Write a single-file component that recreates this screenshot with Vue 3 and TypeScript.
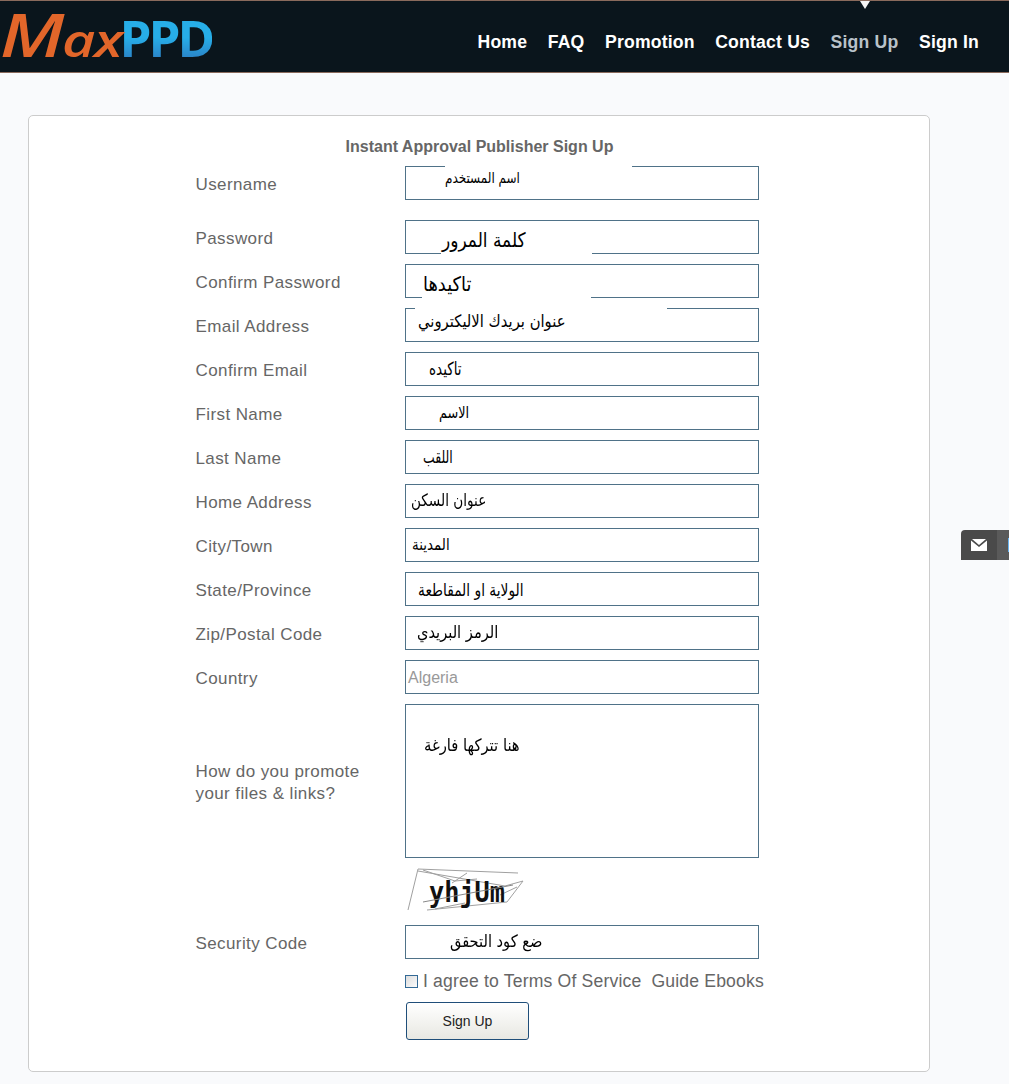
<script setup lang="ts">
interface Field {
  label: string
  text: string
  left: number
  size: number
  scale: number
  dy: number
  gap?: { side: 'top' | 'bottom'; left: number; width: number }
  cls?: string
}

const nav = ['Home', 'FAQ', 'Promotion', 'Contact Us', 'Sign Up', 'Sign In']

const fields: Field[] = [
  { label: 'Username', text: 'اسم المستخدم', left: 39, size: 15, scale: 0.8, dy: -4, gap: { side: 'top', left: 39, width: 187 }, cls: 'first' },
  { label: 'Password', text: 'كلمة المرور', left: 36, size: 20, scale: 0.85, dy: 4, gap: { side: 'bottom', left: 35, width: 151 } },
  { label: 'Confirm Password', text: 'تاكيدها', left: 17, size: 20, scale: 0.89, dy: 4, gap: { side: 'bottom', left: 16, width: 169 } },
  { label: 'Email Address', text: 'عنوان بريدك الاليكتروني', left: 12, size: 17, scale: 0.87, dy: -3, gap: { side: 'top', left: 9, width: 252 } },
  { label: 'Confirm Email', text: 'تاكيده', left: 23, size: 18, scale: 0.75, dy: 1 },
  { label: 'First Name', text: 'الاسم', left: 33, size: 16, scale: 0.8, dy: 1 },
  { label: 'Last Name', text: 'اللقب', left: 17, size: 17, scale: 0.73, dy: 1 },
  { label: 'Home Address', text: 'عنوان السكن', left: 5, size: 17, scale: 0.8, dy: 0 },
  { label: 'City/Town', text: 'المدينة', left: 6, size: 16, scale: 0.84, dy: 1 },
  { label: 'State/Province', text: 'الولاية او المقاطعة', left: 12, size: 17, scale: 0.81, dy: 2 },
  { label: 'Zip/Postal Code', text: 'الرمز البريدي', left: 11, size: 17, scale: 0.86, dy: 0 },
]

function boxStyle(f: Field) {
  return { paddingLeft: f.left + 'px', fontSize: f.size + 'px' }
}
function valStyle(f: Field) {
  return { transform: `translateY(${f.dy}px) scaleX(${f.scale})` }
}
function gapStyle(f: Field) {
  return { left: f.gap!.left + 'px', width: f.gap!.width + 'px' }
}
</script>

<template>
  <div class="page">
    <header class="topbar">
      <div class="logo"><span class="max"><span class="m">M</span>ax</span><span class="ppd">PPD</span></div>
      <nav class="nav">
        <a v-for="n in nav" :key="n" :class="{ active: n === 'Sign Up' }">{{ n }}</a>
      </nav>
    </header>

    <main class="content">
      <section class="card">
        <h1 class="title">Instant Approval Publisher Sign Up</h1>

        <div v-for="f in fields" :key="f.label" class="row" :class="f.cls">
          <label class="label">{{ f.label }}</label>
          <div class="input" :style="boxStyle(f)">
            <span class="val" :style="valStyle(f)">{{ f.text }}</span>
            <i v-if="f.gap" class="gap" :class="f.gap.side" :style="gapStyle(f)"></i>
          </div>
        </div>

        <div class="row">
          <label class="label">Country</label>
          <div class="input country">Algeria</div>
        </div>

        <div class="row tall">
          <label class="label">How do you promote<br />your files &amp; links?</label>
          <div class="input area"><span class="val area-val">هنا تتركها فارغة</span></div>
        </div>

        <div class="captcha-row">
          <svg class="captcha" width="120" height="46" viewBox="0 0 120 46">
            <g stroke="#a0a0a0" stroke-width="1" fill="none">
              <path d="M3 43 L13 2 L113 6" />
              <path d="M13 4 L100 19 L118 14" />
              <path d="M18 3 L50 14 L72 12" />
              <path d="M22 43 L102 35 L118 14" />
              <path d="M30 42 L60 36" />
              <path d="M62 6 L47 16" />
              <path d="M112 20 L95 28" />
            </g>
            <text x="24" y="35" textLength="76" lengthAdjust="spacingAndGlyphs" class="captcha-text">yhjUm</text>
            <path d="M18 35 L108 18" stroke="#888" stroke-width="1" fill="none" />
          </svg>
        </div>

        <div class="row security">
          <label class="label">Security Code</label>
          <div class="input sec"><span class="val sec-val">ضع كود التحقق</span></div>
        </div>

        <div class="agree">
          <span class="check"></span>
          <span>I agree to Terms Of Service</span>
          <span class="ebooks">Guide Ebooks</span>
        </div>

        <button class="submit" type="button">Sign Up</button>
      </section>
    </main>

    <aside class="side">
      <span class="cell">
        <svg width="16" height="12" viewBox="0 0 16 12">
          <path d="M1 0 H15 L8 6 Z" fill="#fff" />
          <path d="M0 1.5 L8 8 L16 1.5 V12 H0 Z" fill="#fff" />
        </svg>
      </span>
      <span class="cell two"><i></i></span>
    </aside>
  </div>
</template>

<style>
html, body { margin: 0; background: #f9fafc; overflow: hidden; }
</style>

<style scoped>
.page {
  position: relative;
  width: 1009px;
  height: 1084px;
  background: #f9fafc;
  font-family: "Liberation Sans", "DejaVu Sans", sans-serif;
  overflow: hidden;
}
.topbar {
  box-sizing: border-box;
  height: 73px;
  background: #0a151c;
  border-top: 1px solid #8a6a5c;
  border-bottom: 1px solid #8a6a5c;
  display: flex;
  justify-content: space-between;
  position: relative;
}
.topbar::after {
  content: "";
  position: absolute;
  left: 860px;
  top: 0;
  border-left: 5px solid transparent;
  border-right: 5px solid transparent;
  border-top: 8px solid #f4f4f4;
}
.logo {
  display: flex;
  align-items: baseline;
  height: 67px;
  white-space: nowrap;
  line-height: 67px;
  font-family: "Open Sans", sans-serif;
  font-size: 51px;
}
.max {
  display: block;
  margin-right: 22px;
  color: #e2662a;
  font-style: italic;
  font-weight: 600;
  font-size: 46px;
  letter-spacing: -1px;
  transform: scaleX(1.25);
  transform-origin: 0 50%;
}
.m { font-size: 60px; letter-spacing: -2px; }
.ppd {
  font-weight: 700;
  font-size: 51px;
  letter-spacing: -3px;
  background: linear-gradient(#27aee8 50%, #2b7fc4 85%);
  -webkit-background-clip: text;
  background-clip: text;
  color: transparent;
}
.nav {
  display: flex;
  gap: 20.5px;
  padding: 31px 30px 0 0;
  font-size: 17.6px;
  font-weight: 700;
  letter-spacing: 0.2px;
  line-height: 20px;
  color: #fff;
}
.nav .active { color: #b9c2c9; }

.content { padding: 42px 0 0 28px; }
.card {
  box-sizing: border-box;
  width: 902px;
  height: 957px;
  background: #fff;
  border: 1px solid #ccc;
  border-radius: 5px;
  padding: 21px 0 0 167px;
}
.title {
  margin: 0 0 9px;
  width: 567px;
  text-align: center;
  font-size: 16px;
  line-height: 20px;
  font-weight: 700;
  color: #666;
}
.row {
  display: flex;
  align-items: center;
  height: 34px;
  margin-bottom: 10px;
}
.row.first { margin-bottom: 20px; }
.row.tall { height: 154px; }
.label {
  width: 209.5px;
  flex: none;
  margin-left: -0.5px;
  padding-top: 3px;
  font-size: 17px;
  letter-spacing: 0.4px;
  line-height: 22px;
  color: #666;
}
.input {
  position: relative;
  box-sizing: border-box;
  width: 354px;
  height: 34px;
  border: 1px solid #4f7288;
  background: #fff;
  color: #000;
  line-height: 30px;
  white-space: nowrap;
}
.val {
  display: inline-block;
  font-family: "DejaVu Sans", sans-serif;
  transform-origin: 0 50%;
}
.gap {
  position: absolute;
  height: 2px;
  background: #fff;
}
.gap.top { top: -1px; }
.gap.bottom { bottom: -1px; }
.country {
  color: #999;
  font-size: 16px;
  line-height: 33px;
  padding-left: 2px;
}
.area {
  height: 154px;
  padding: 25px 0 0 18px;
  font-size: 17px;
}
.area-val { transform: scaleX(0.87); }
.captcha-row {
  height: 46px;
  padding-left: 209px;
  margin-bottom: 12px;
  margin-top: -1px;
}
.captcha-text {
  font-family: "DejaVu Sans Mono", monospace;
  font-weight: 700;
  font-size: 29px;
  fill: #111;
}
.sec { padding-left: 44px; font-size: 17px; }
.sec-val { transform: scaleX(0.86); }
.row.security { margin-bottom: 11px; }
.agree {
  display: flex;
  align-items: center;
  padding-left: 209px;
  height: 22px;
  font-size: 17.6px;
  letter-spacing: 0.17px;
  color: #666;
  white-space: nowrap;
}
.check {
  box-sizing: border-box;
  width: 13px;
  height: 13px;
  margin-right: 5px;
  border: 1px solid #336a96;
  background: linear-gradient(135deg, #ddd, #fbfbfb);
}
.ebooks { margin-left: 10px; }
.submit {
  display: block;
  box-sizing: border-box;
  margin: 10px 0 0 210px;
  width: 123px;
  height: 38px;
  border: 1px solid #1f4e79;
  border-radius: 3px;
  background: linear-gradient(#fff, #e8e8e2);
  color: #222;
  font-family: inherit;
  font-size: 14px;
  padding: 0;
}
.side {
  position: absolute;
  left: 961px;
  top: 530px;
  display: flex;
  height: 30px;
  width: 48px;
  border-top-left-radius: 4px;
  overflow: hidden;
}
.cell {
  width: 36px;
  flex: none;
  background: #4a4a4a;
  display: flex;
  align-items: center;
  justify-content: center;
}
.cell.two { width: 12px; background: #5a5a5a; justify-content: flex-start; padding-left: 11px; box-sizing: border-box; }
.cell.two i { width: 2px; height: 14px; background: #6ab4f0; }
</style>
